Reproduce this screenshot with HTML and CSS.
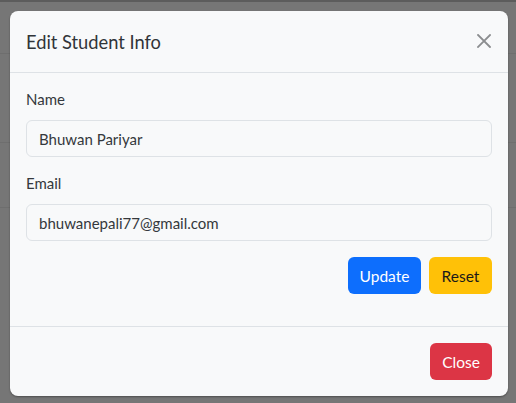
FILE: index.html
```html
<!DOCTYPE html>
<html>
<head>
<meta charset="utf-8">
<link rel="stylesheet" href="styles.css">
</head>
<body>
<div class="backdrop">
  <div class="bg-lines">
    <div class="bg-line l1"></div>
    <div class="bg-line l2"></div>
    <div class="bg-line l3"></div>
  </div>
  <div class="modal">
    <div class="modal-header">
      <h5 class="modal-title">Edit Student Info</h5>
      <button class="btn-close" aria-label="Close">
        <svg width="14" height="14" viewBox="0 0 14 14"><path d="M1 1 L13 13 M13 1 L1 13" stroke="#8b8d8f" stroke-width="1.8" stroke-linecap="square" fill="none"/></svg>
      </button>
    </div>
    <div class="modal-body">
      <div class="field">
        <label class="form-label">Name</label>
        <div class="form-control">Bhuwan Pariyar</div>
      </div>
      <div class="field">
        <label class="form-label">Email</label>
        <div class="form-control">bhuwanepali77@gmail.com</div>
      </div>
      <div class="actions">
        <button class="btn btn-primary">Update</button>
        <button class="btn btn-warning">Reset</button>
      </div>
    </div>
    <div class="modal-footer">
      <button class="btn btn-danger">Close</button>
    </div>
  </div>
</div>
</body>
</html>
```
FILE: styles.css
```css
html, body {
  margin: 0;
  padding: 0;
}
body {
  background: #767676;
  font-family: "Lato", "Liberation Sans", sans-serif;
  color: #212529;
  width: 516px;
  height: 403px;
  overflow: hidden;
}
.backdrop {
  position: relative;
  height: 403px;
  border-top: 2px solid #5c5c5c;
  box-sizing: border-box;
  padding: 9px 8px 0 10px;
}
.bg-lines {
  position: absolute;
  inset: 0;
}
.bg-line {
  position: absolute;
  left: 0;
  right: 0;
  height: 1px;
  background: #6e6e6e;
}
.l1 { top: 51px; }
.l2 { top: 140px; }
.l3 { top: 205px; }
.modal {
  position: relative;
  width: 498px;
  background: #f8f9fa;
  border-radius: 8px;
  box-shadow: 0 1px 2px rgba(0, 0, 0, 0.35);
}
.modal-header {
  display: flex;
  align-items: center;
  justify-content: space-between;
  height: 61px;
  padding: 0 17px 0 16px;
  border-bottom: 1px solid #dee2e6;
}
.modal-title {
  margin: 0;
  font-size: 18.3px;
  font-weight: 400;
  color: #303438;
  line-height: 28px;
}
.btn-close {
  border: 0;
  background: transparent;
  padding: 0;
  width: 14px;
  height: 14px;
  display: flex;
  margin-top: -2px;
}
.modal-body {
  padding: 16px;
  border-bottom: 1px solid #dee2e6;
}
.field {
  margin-bottom: 16px;
}
.form-label {
  display: block;
  font-size: 15px;
  line-height: 21px;
  margin-bottom: 10px;
  color: #34383c;
}
.form-control {
  height: 37px;
  box-sizing: border-box;
  border: 1px solid #dee2e6;
  border-radius: 6px;
  padding: 0 12px;
  display: flex;
  align-items: center;
  font-size: 15px;
  color: #34383c;
  background: #f8f9fa;
}
.actions {
  display: flex;
  justify-content: flex-end;
  gap: 8px;
  margin-bottom: 16px;
}
.btn {
  height: 37px;
  border: 0;
  border-radius: 6px;
  font-family: inherit;
  font-size: 15.5px;
  padding: 0;
  cursor: pointer;
}
.btn-primary {
  background: #0d6efd;
  color: #fff;
  width: 73px;
}
.btn-warning {
  background: #ffc107;
  color: #1a1a1a;
  width: 63px;
}
.btn-danger {
  background: #dc3545;
  color: #fff;
  width: 62px;
}
.modal-footer {
  display: flex;
  justify-content: flex-end;
  padding: 16px;
}
```
